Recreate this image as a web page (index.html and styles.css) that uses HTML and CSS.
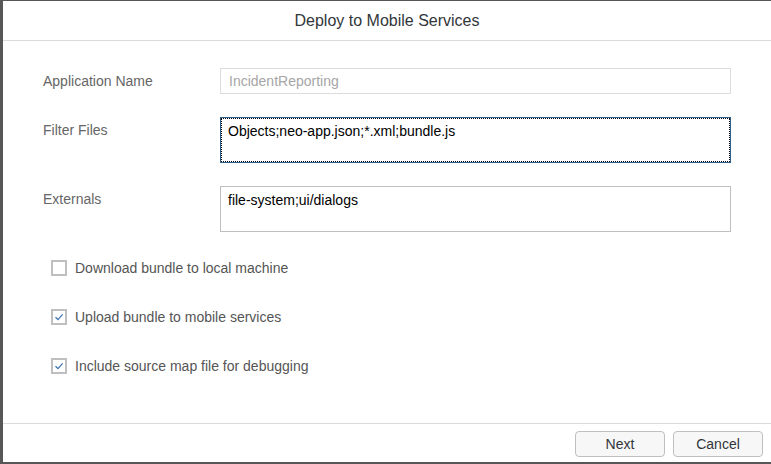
FILE: index.html
```html
<!DOCTYPE html>
<html lang="en">
<head>
<meta charset="utf-8">
<title>Deploy to Mobile Services</title>
<link rel="stylesheet" href="styles.css">
</head>
<body>
<div class="dialog">
  <header class="dlg-header">Deploy to Mobile Services</header>
  <main class="dlg-content">
    <div class="form">
      <label class="lbl" for="appName">Application Name</label>
      <input id="appName" class="field field-disabled" type="text" value="IncidentReporting" disabled>
      <label class="lbl" for="filterFiles">Filter Files</label>
      <textarea id="filterFiles" class="field area area-focus">Objects;neo-app.json;*.xml;bundle.js</textarea>
      <label class="lbl" for="externals">Externals</label>
      <textarea id="externals" class="field area">file-system;ui/dialogs</textarea>
    </div>
    <div class="checks">
      <label class="check"><span class="box"></span><span class="check-text">Download bundle to local machine</span></label>
      <label class="check"><span class="box"><svg viewBox="0 0 12 12" width="12" height="12"><path d="M2.5 6.3 L5 8.6 L9.6 3.4" fill="none" stroke="#3f76b0" stroke-width="1.3"/></svg></span><span class="check-text">Upload bundle to mobile services</span></label>
      <label class="check"><span class="box"><svg viewBox="0 0 12 12" width="12" height="12"><path d="M2.5 6.3 L5 8.6 L9.6 3.4" fill="none" stroke="#3f76b0" stroke-width="1.3"/></svg></span><span class="check-text">Include source map file for debugging</span></label>
    </div>
  </main>
  <footer class="dlg-footer">
    <button class="btn" type="button">Next</button>
    <button class="btn" type="button">Cancel</button>
  </footer>
</div>
</body>
</html>
```
FILE: styles.css
```css
html, body {
  margin: 0;
  padding: 0;
}
body {
  background: #575757;
  width: 771px;
  height: 464px;
  overflow: hidden;
  font-family: "Liberation Sans", Arial, sans-serif;
}
.dialog {
  margin: 1px 0 0 3px;
  width: 768px;
  height: 461px;
  background: #fff;
  display: flex;
  flex-direction: column;
}
.dlg-header {
  height: 39px;
  line-height: 40px;
  border-bottom: 1px solid #dadada;
  text-align: center;
  font-size: 16px;
  color: #32363a;
  flex: none;
}
.dlg-content {
  flex: 1;
  padding: 27px 40px 0 40px;
}
.form {
  display: grid;
  grid-template-columns: 177px 511px;
  row-gap: 23px;
}
.lbl {
  font-size: 14px;
  line-height: 26px;
  color: #666;
}
.field {
  box-sizing: border-box;
  width: 511px;
  margin: 0;
  font-family: inherit;
  font-size: 14px;
  color: #000;
  background: #fff;
  border: 1px solid #bfbfbf;
  padding: 0 8px;
}
.field-disabled {
  height: 26px;
  border-color: #dcdcdc;
  color: #a6a6a6;
  -webkit-text-fill-color: #a6a6a6;
  opacity: 1;
}
.area {
  height: 46px;
  resize: none;
  overflow: hidden;
  padding: 5px 7px;
  line-height: 16px;
  display: block;
}
.area-focus {
  border-color: #2f5f8f;
  outline: 1px dotted #000;
  outline-offset: -2px;
}
.checks {
  margin-top: 28px;
  padding-left: 8px;
  display: flex;
  flex-direction: column;
  gap: 33px;
}
.check {
  display: flex;
  align-items: center;
  height: 16px;
  gap: 8px;
}
.box {
  box-sizing: border-box;
  width: 16px;
  height: 16px;
  border: 2px solid #bfbfbf;
  display: flex;
  align-items: center;
  justify-content: center;
  background: #fff;
}
.check-text {
  font-size: 14px;
  color: #555;
}
.dlg-footer {
  flex: none;
  height: 38px;
  border-top: 1px solid #dadada;
  box-sizing: content-box;
  display: flex;
  justify-content: flex-end;
  align-items: flex-start;
  gap: 8px;
  padding: 7px 8px 0 0;
  box-sizing: border-box;
  height: 39px;
}
.btn {
  width: 90px;
  height: 26px;
  border: 1px solid #bfbfbf;
  border-radius: 4px;
  background: #f7f7f7;
  font-family: inherit;
  font-size: 14px;
  color: #32363a;
  padding: 0;
}
```
